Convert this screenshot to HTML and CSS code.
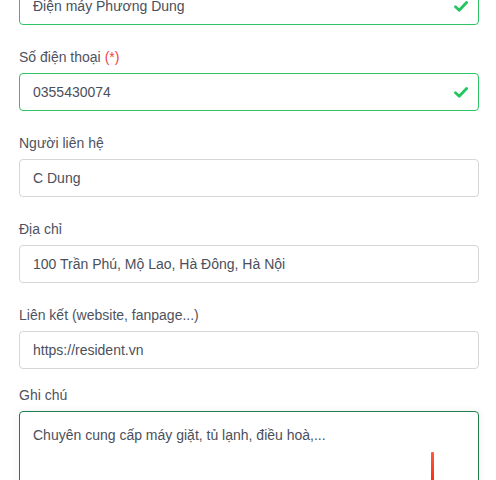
FILE: index.html
```html
<!DOCTYPE html>
<html lang="vi">
<head>
<meta charset="utf-8">
<link rel="stylesheet" href="styles.css">
</head>
<body>
<form class="form">
  <div class="field">
    <div class="control valid">
      <span class="value">Điện máy Phương Dung</span>
      <svg class="check" viewBox="0 0 14 11" width="14" height="11"><path d="M1.5 5.8 L5.2 9.2 L12.6 1.6" fill="none" stroke="#22c55e" stroke-width="2.8" stroke-linecap="round" stroke-linejoin="round"/></svg>
    </div>
  </div>
  <div class="field">
    <label class="label">Số điện thoại <span class="req">(*)</span></label>
    <div class="control valid">
      <span class="value">0355430074</span>
      <svg class="check" viewBox="0 0 14 11" width="14" height="11"><path d="M1.5 5.8 L5.2 9.2 L12.6 1.6" fill="none" stroke="#22c55e" stroke-width="2.8" stroke-linecap="round" stroke-linejoin="round"/></svg>
    </div>
  </div>
  <div class="field">
    <label class="label">Người liên hệ</label>
    <div class="control"><span class="value">C Dung</span></div>
  </div>
  <div class="field">
    <label class="label">Địa chỉ</label>
    <div class="control"><span class="value">100 Trần Phú, Mộ Lao, Hà Đông, Hà Nội</span></div>
  </div>
  <div class="field">
    <label class="label">Liên kết (website, fanpage...)</label>
    <div class="control"><span class="value">https://resident.vn</span></div>
  </div>
  <div class="field field-last">
    <label class="label">Ghi chú</label>
    <div class="textarea">
      <span class="value">Chuyên cung cấp máy giặt, tủ lạnh, điều hoà,...</span>
      <span class="marker"></span>
    </div>
  </div>
</form>
</body>
</html>
```

FILE: styles.css
```css
html, body {
  margin: 0;
  padding: 0;
  background: #ffffff;
  overflow: hidden;
}
body {
  font-family: "Liberation Sans", Arial, sans-serif;
  font-size: 14px;
  color: #4b4f5c;
}
.form {
  margin-top: -13px;
  padding: 0 17px 0 19px;
  display: flex;
  flex-direction: column;
  gap: 22px;
}
.field {
  display: flex;
  flex-direction: column;
}
.field-last {
  margin-top: -6px;
}
.label {
  display: block;
  line-height: 20px;
  height: 20px;
  margin-bottom: 6px;
  color: #4e5260;
}
.req {
  color: #ef4444;
}
.control {
  box-sizing: border-box;
  height: 38px;
  border: 1px solid #d4d6da;
  border-radius: 4px;
  padding: 0 10px 0 13px;
  display: flex;
  align-items: center;
  justify-content: space-between;
  background: #fff;
}
.control.valid {
  border-color: #2cc465;
}
.value {
  line-height: 20px;
  color: #4b4f5c;
}
.check {
  display: block;
  flex: none;
}
.textarea {
  position: relative;
  box-sizing: border-box;
  height: 110px;
  border: 1px solid #1f7f4a;
  border-radius: 4px;
  padding: 13px 13px;
  box-shadow: 0 0 6px 2px rgba(0, 0, 0, 0.04);
}
.marker {
  position: absolute;
  left: 411px;
  top: 40px;
  width: 3px;
  height: 40px;
  background: linear-gradient(#ff5a3c, #ff1a00);
  border-radius: 1px;
}
```
